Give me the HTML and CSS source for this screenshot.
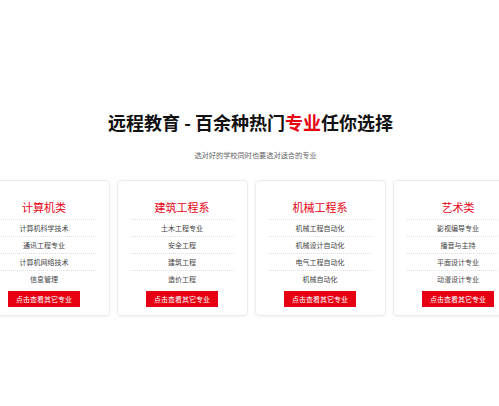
FILE: index.html
```html
<!DOCTYPE html>
<html lang="zh">
<head>
<meta charset="utf-8">
<link rel="stylesheet" href="styles.css">
</head>
<body>
<div class="page">
  <h1 class="title">远程教育 - 百余种热门<span class="hl">专业</span>任你选择</h1>
  <p class="subtitle">选对好的学校同时也要选对适合的专业</p>
  <div class="cards">
    <div class="card">
      <h2 class="card-title">计算机类</h2>
      <ul class="list">
        <li>计算机科学技术</li>
        <li>通讯工程专业</li>
        <li>计算机网络技术</li>
        <li>信息管理</li>
      </ul>
      <a class="btn">点击查看其它专业</a>
    </div>
    <div class="card">
      <h2 class="card-title">建筑工程系</h2>
      <ul class="list">
        <li>土木工程专业</li>
        <li>安全工程</li>
        <li>建筑工程</li>
        <li>造价工程</li>
      </ul>
      <a class="btn">点击查看其它专业</a>
    </div>
    <div class="card">
      <h2 class="card-title">机械工程系</h2>
      <ul class="list">
        <li>机械工程自动化</li>
        <li>机械设计自动化</li>
        <li>电气工程自动化</li>
        <li>机械自动化</li>
      </ul>
      <a class="btn">点击查看其它专业</a>
    </div>
    <div class="card">
      <h2 class="card-title">艺术类</h2>
      <ul class="list">
        <li>影视编导专业</li>
        <li>播音与主持</li>
        <li>平面设计专业</li>
        <li>动漫设计专业</li>
      </ul>
      <a class="btn">点击查看其它专业</a>
    </div>
  </div>
</div>
</body>
</html>
```
FILE: styles.css
```css
html, body {
  margin: 0;
  padding: 0;
  background: #fff;
  overflow: hidden;
}
body {
  width: 499px;
  height: 406px;
  font-family: "Noto Sans CJK SC", "Microsoft YaHei", sans-serif;
  color: #333;
}
.page {
  padding-top: 109px;
  display: flex;
  flex-direction: column;
  align-items: center;
}
.title {
  margin: 0;
  font-size: 18px;
  line-height: 26px;
  font-weight: 700;
  color: #111;
  margin-left: 2px;
}
.hl {
  color: #e60012;
}
.subtitle {
  margin: 15px 0 0 12px;
  font-size: 7.2px;
  line-height: 10px;
  color: #666;
}
.cards {
  margin-top: 20px;
  width: 499px;
  display: flex;
  justify-content: center;
  gap: 7px;
  padding-left: 3px;
  box-sizing: border-box;
}
.card {
  flex: 0 0 131px;
  height: 136px;
  box-sizing: border-box;
  border: 1px solid #ececec;
  border-radius: 4px;
  box-shadow: 0 1px 3px rgba(0,0,0,0.05);
  padding: 0 13px;
  display: flex;
  flex-direction: column;
  align-items: center;
}
.card-title {
  margin: 19px 0 0;
  font-size: 11px;
  line-height: 14px;
  font-weight: 400;
  color: #e60012;
  width: 100%;
  text-align: center;
  padding-bottom: 5px;
  border-bottom: 1px dotted #ddd;
}
.list {
  list-style: none;
  margin: 0;
  padding: 0;
  width: 100%;
}
.list li {
  font-size: 7px;
  line-height: 16px;
  text-align: center;
  color: #444;
  border-bottom: 1px dotted #ddd;
}
.list li:last-child {
  border-bottom: none;
}
.btn {
  margin-top: 4px;
  width: 72px;
  height: 16px;
  background: #e60012;
  color: #fff;
  font-size: 7px;
  line-height: 16px;
  text-align: center;
  display: block;
}
```
